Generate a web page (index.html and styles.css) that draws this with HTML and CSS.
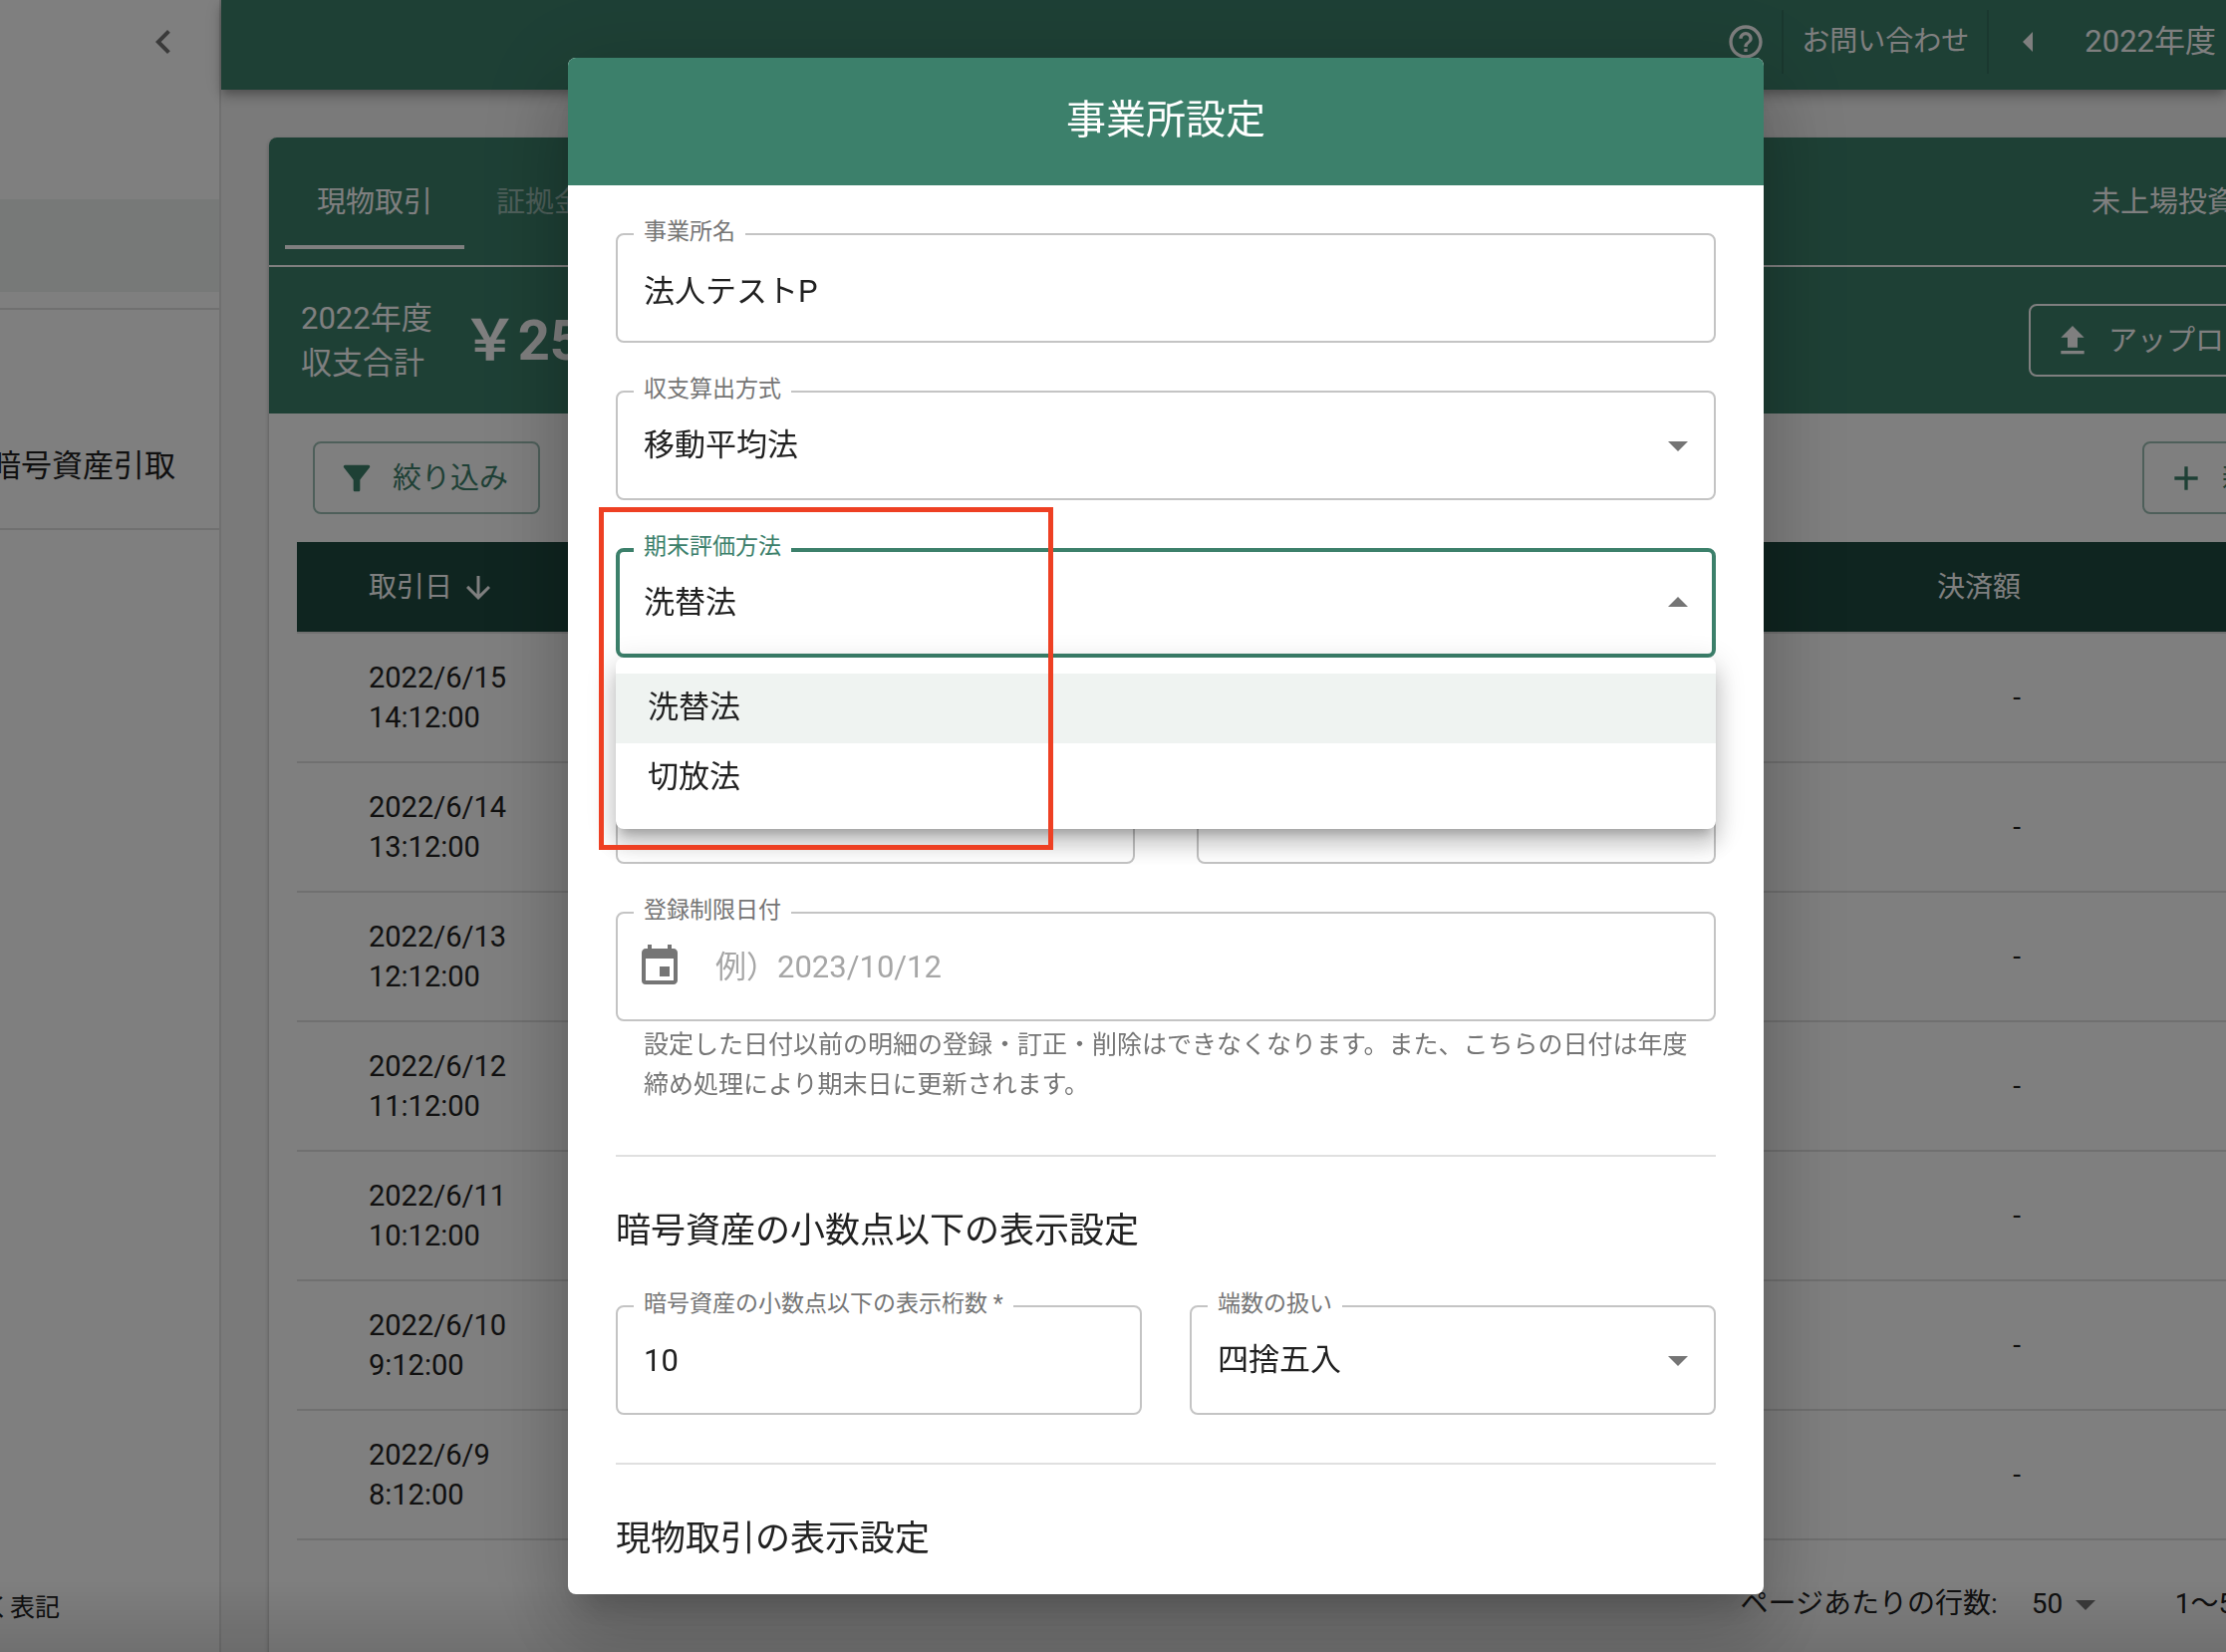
FILE: index.html
```html
<!DOCTYPE html>
<html lang="ja">
<head>
    <meta charset="UTF-8">
    <meta name="viewport" content="width=device-width, initial-scale=1.0">
    <title>事業所設定</title>
    <link rel="stylesheet" href="styles.css">
</head>
<body>
    <div class="app">
        <aside class="sidebar">
            <div class="sidebar-head">
                <button class="icon-button" aria-label="メニューを閉じる">
                    <svg class="icon icon-lg" viewBox="0 0 24 24"><path d="M15.41 7.41L14 6l-6 6 6 6 1.41-1.41L10.83 12z"/></svg>
                </button>
            </div>
            <div class="sidebar-current"></div>
            <nav class="sidebar-nav">
                <a href="#">暗号資産引取</a>
            </nav>
            <a href="#" class="sidebar-law">く表記</a>
        </aside>

        <div class="main">
            <header class="topbar">
                <button class="icon-button help" aria-label="ヘルプ">
                    <svg class="icon icon-md" viewBox="0 0 24 24"><path d="M11 18h2v-2h-2v2zm1-16C6.48 2 2 6.48 2 12s4.48 10 10 10 10-4.48 10-10S17.52 2 12 2zm0 18c-4.41 0-8-3.59-8-8s3.59-8 8-8 8 3.59 8 8-3.59 8-8 8zm0-14c-2.21 0-4 1.79-4 4h2c0-1.1.9-2 2-2s2 .9 2 2c0 2-3 1.75-3 5h2c0-2.25 3-2.5 3-5 0-2.21-1.79-4-4-4z"/></svg>
                </button>
                <a href="#" class="contact">お問い合わせ</a>
                <div class="year">
                    <button class="icon-button" aria-label="前の年度">
                        <svg class="icon icon-lg" viewBox="0 0 24 24"><path d="M14 7l-5 5 5 5V7z"/></svg>
                    </button>
                    <span>2022年度</span>
                </div>
            </header>

            <main class="content">
                <section class="card">
                    <nav class="tabs">
                        <a href="#" class="tab active">現物取引</a>
                        <a href="#" class="tab">証拠金</a>
                        <a href="#" class="tab unlisted">未上場投資</a>
                    </nav>
                    <div class="summary">
                        <p class="summary-label">2022年度<br>収支合計</p>
                        <p class="summary-total">￥25</p>
                        <button class="button button-light">
                            <svg class="icon icon-md" viewBox="0 0 24 24"><path d="M9 16h6v-6h4l-7-7-7 7h4zm-4 2h14v2H5z"/></svg>
                            アップロード
                        </button>
                    </div>
                    <div class="toolbar">
                        <button class="button">
                            <svg class="icon icon-md" viewBox="0 0 24 24"><path d="M4.25 5.61C6.27 8.2 10 13 10 13v6c0 .55.45 1 1 1h2c.55 0 1-.45 1-1v-6s3.72-4.8 5.74-7.39A1 1 0 0018.95 4H5.04c-.83 0-1.3.95-.79 1.61z"/></svg>
                            絞り込み
                        </button>
                        <button class="button">
                            <svg class="icon icon-md" viewBox="0 0 24 24"><path d="M19 13h-6v6h-2v-6H5v-2h6V5h2v6h6v2z"/></svg>
                            新規追加
                        </button>
                    </div>
                    <table class="trades">
                        <thead>
                            <tr>
                                <th class="date"><span class="sort">取引日 <svg class="icon icon-sm" viewBox="0 0 24 24"><path d="M20 12l-1.41-1.41L13 16.17V4h-2v12.17l-5.58-5.59L4 12l8 8 8-8z"/></svg></span></th>
                                <th class="amount">決済額</th>
                                <th class="rest"></th>
                            </tr>
                        </thead>
                        <tbody>
                            <tr><td class="date">2022/6/15<br>14:12:00</td><td class="amount">-</td><td></td></tr>
                            <tr><td class="date">2022/6/14<br>13:12:00</td><td class="amount">-</td><td></td></tr>
                            <tr><td class="date">2022/6/13<br>12:12:00</td><td class="amount">-</td><td></td></tr>
                            <tr><td class="date">2022/6/12<br>11:12:00</td><td class="amount">-</td><td></td></tr>
                            <tr><td class="date">2022/6/11<br>10:12:00</td><td class="amount">-</td><td></td></tr>
                            <tr><td class="date">2022/6/10<br>9:12:00</td><td class="amount">-</td><td></td></tr>
                            <tr><td class="date">2022/6/9<br>8:12:00</td><td class="amount">-</td><td></td></tr>
                        </tbody>
                    </table>
                    <div class="pagination">
                        <label for="rows">ページあたりの行数:</label>
                        <div class="rows">
                            <select id="rows">
                                <option>50</option>
                            </select>
                            <svg class="icon icon-lg arrow" viewBox="0 0 24 24"><path d="M7 10l5 5 5-5z"/></svg>
                        </div>
                        <span>1〜50</span>
                    </div>
                </section>
            </main>
        </div>
    </div>

    <div class="backdrop">
        <div class="modal" role="dialog" aria-labelledby="modal-title">
            <h1 id="modal-title" class="modal-title">事業所設定</h1>
            <form class="modal-body">
                <div class="field">
                    <label for="office">事業所名</label>
                    <input type="text" id="office" value="法人テストP">
                </div>

                <div class="field">
                    <label for="method">収支算出方式</label>
                    <select id="method">
                        <option>移動平均法</option>
                    </select>
                    <svg class="icon icon-lg arrow" viewBox="0 0 24 24"><path d="M7 10l5 5 5-5z"/></svg>
                </div>

                <div class="field open">
                    <label for="valuation">期末評価方法</label>
                    <select id="valuation">
                        <option>洗替法</option>
                        <option>切放法</option>
                    </select>
                    <svg class="icon icon-lg arrow" viewBox="0 0 24 24"><path d="M7 14l5-5 5 5z"/></svg>
                    <ul class="menu" role="listbox" aria-label="期末評価方法">
                        <li role="option" aria-selected="true" class="selected">洗替法</li>
                        <li role="option" aria-selected="false">切放法</li>
                    </ul>
                    <div class="highlight"></div>
                </div>

                <!-- fiscal period, mostly covered while the menu is open -->
                <div class="period">
                    <div class="field"><input type="text" aria-label="期首"></div>
                    <div class="field"><input type="text" aria-label="期末"></div>
                </div>

                <div class="field with-icon">
                    <label for="limit">登録制限日付</label>
                    <svg class="icon icon-lg" viewBox="0 0 24 24"><path d="M17 12h-5v5h5v-5zM16 1v2H8V1H6v2H5c-1.11 0-1.99.9-1.99 2L3 19a2 2 0 002 2h14c1.1 0 2-.9 2-2V5c0-1.1-.9-2-2-2h-1V1h-2zm3 18H5V8h14v11z"/></svg>
                    <input type="text" id="limit" placeholder="例）2023/10/12">
                </div>
                <p class="helper">設定した日付以前の明細の登録・訂正・削除はできなくなります。また、こちらの日付は年度締め処理により期末日に更新されます。</p>

                <hr>
                <h2>暗号資産の小数点以下の表示設定</h2>
                <div class="columns">
                    <div class="field">
                        <label for="digits">暗号資産の小数点以下の表示桁数 *</label>
                        <input type="text" id="digits" value="10">
                    </div>
                    <div class="field">
                        <label for="rounding">端数の扱い</label>
                        <select id="rounding">
                            <option>四捨五入</option>
                        </select>
                        <svg class="icon icon-lg arrow" viewBox="0 0 24 24"><path d="M7 10l5 5 5-5z"/></svg>
                    </div>
                </div>

                <hr>
                <h2>現物取引の表示設定</h2>
            </form>
        </div>
    </div>
</body>
</html>
```

FILE: styles.css
```css
:root {
    --green: #3c806b;
    --green-dark: #1e4a40;
    --text: #212121;
    --line: #e0e0e0;
    --overhang: 188px; /* the card is wider than the window */
}

*, *::before, *::after {
    box-sizing: border-box;
}

body {
    margin: 0;
    overflow: hidden;
    color: var(--text);
    font: 28px/40px Roboto, "Noto Sans CJK JP", sans-serif;
}

h1, h2, p, ul {
    margin: 0;
    padding: 0;
    font-weight: 400;
}

a {
    color: inherit;
    text-decoration: none;
}

button, input, select {
    color: inherit;
    font: inherit;
}

.icon {
    display: block;
    flex: none;
    fill: currentColor;
}

.icon-sm { width: 36px; height: 36px; }
.icon-md { width: 40px; height: 40px; }
.icon-lg { width: 48px; height: 48px; }

.icon-button {
    padding: 0;
    border: 0;
    background: none;
}

.app {
    display: flex;
    height: 100vh;
    overflow: hidden;
}

/* sidebar */
.sidebar {
    display: flex;
    flex-direction: column;
    flex: none;
    width: 222px;
    overflow: hidden;
    border-right: 2px solid var(--line);
    background: #fff;
}

.sidebar-head {
    display: flex;
    justify-content: flex-end;
    height: 200px;
    padding: 18px 32px;
    color: #757575;
}

.sidebar-head .icon-button {
    height: 48px;
}

.sidebar-current {
    height: 93px;
    background: #eff3f1;
}

.sidebar-nav {
    display: flex;
    justify-content: flex-end;
    align-items: flex-end;
    height: 223px;
    margin-top: 16px;
    padding: 0 44px 42px 0;
    border-top: 2px solid var(--line);
    border-bottom: 2px solid var(--line);
    font-size: 31px;
    white-space: nowrap;
}

.sidebar-law {
    align-self: flex-end;
    margin-top: auto;
    padding: 0 160px 24px 0;
    font-size: 25px;
    white-space: nowrap;
}

/* top bar */
.main {
    display: flex;
    flex-direction: column;
    flex: 1;
    min-width: 0;
    background: #f5f5f5;
}

.topbar {
    display: flex;
    justify-content: flex-end;
    align-items: center;
    flex: none;
    height: 90px;
    padding: 0 10px 6px 0;
    background: var(--green);
    color: #fff;
    box-shadow: 0 4px 8px -2px rgba(0, 0, 0, .2), 0 8px 10px rgba(0, 0, 0, .14), 0 2px 20px rgba(0, 0, 0, .12);
}

.contact {
    margin-left: 16px;
    padding: 12px 18px;
    border: solid rgba(0, 0, 0, .12);
    border-width: 0 2px;
}

.year {
    display: flex;
    align-items: center;
    gap: 32px;
    margin-left: 16px;
    font-size: 31px;
}

/* card */
.content {
    display: flex;
    flex: 1;
    padding: 48px 0 0 48px;
}

.card {
    flex: none;
    width: calc(100% + var(--overhang));
    overflow: hidden;
    border-radius: 8px 8px 0 0;
    background: #fff;
    box-shadow: 0 2px 4px rgba(0, 0, 0, .3);
}

.tabs {
    display: flex;
    padding: 16px;
    border-bottom: 2px solid #fff;
    background: var(--green);
    color: #fff;
    font-size: 29px;
}

.tab {
    padding: 29px 32px 23px;
    border-bottom: 4px solid transparent;
    color: rgba(255, 255, 255, .5);
}

.tab.active {
    border-color: #fff;
    color: #fff;
}

.tab.unlisted {
    margin: 0 130px 0 auto;
    color: #fff;
}

.summary {
    display: flex;
    align-items: center;
    height: 147px;
    padding: 0 100px 0 32px;
    background: var(--green);
    color: #fff;
}

.summary-label {
    font-size: 31px;
    line-height: 45px;
}

.summary-total {
    margin: 0 auto 0 30px;
    font-size: 56px;
    font-weight: 700;
}

.toolbar {
    display: flex;
    justify-content: space-between;
    padding: 28px 44px;
}

.button {
    display: flex;
    align-items: center;
    gap: 16px;
    height: 73px;
    padding: 0 30px 0 22px;
    border: 2px solid rgba(60, 128, 107, .5);
    border-radius: 8px;
    background: none;
    color: var(--green);
    font-size: 29px;
}

.button-light {
    border-color: #fff;
    color: #fff;
}

.trades {
    width: calc(100% - 56px);
    margin: 0 28px;
    border-collapse: separate;
    border-spacing: 0;
    line-height: 40px;
}

.trades th {
    height: 92px;
    padding: 2px 0 0;
    border-bottom: 2px solid var(--line);
    background: var(--green-dark);
    background-clip: padding-box;
    color: #fff;
    font-weight: 400;
}

.trades td {
    height: 130px;
    padding: 0;
    border-bottom: 2px solid var(--line);
}

.trades .date {
    padding-left: 72px;
    text-align: left;
}

.trades td.date {
    font-size: 29px;
}

.trades .amount {
    text-align: right;
}

.trades .rest {
    width: 366px;
}

.sort {
    display: flex;
    align-items: center;
    gap: 8px;
}

.pagination {
    display: flex;
    justify-content: flex-end;
    align-items: center;
    height: 128px;
    padding-right: 164px;
}

.rows {
    position: relative;
    margin: 0 66px 0 34px;
}

.rows select {
    appearance: none;
    display: block;
    width: 78px;
    padding: 0;
    border: 0;
    background: none;
}

.rows .arrow {
    position: absolute;
    top: -4px;
    right: 0;
    color: #757575;
    pointer-events: none;
}

/* modal */
.backdrop {
    position: fixed;
    inset: 0;
    display: flex;
    justify-content: center;
    padding: 58px 0 58px 106px;
    background: rgba(0, 0, 0, .5);
}

.backdrop::before {
    content: "";
    position: absolute;
    inset: auto 0 0;
    height: 72px;
    background: linear-gradient(transparent, rgba(0, 0, 0, .12));
}

.modal {
    position: relative;
    width: 100%;
    max-width: 1200px;
    overflow: hidden;
    border-radius: 8px;
    background: #fff;
    box-shadow: 0 22px 30px -14px rgba(0, 0, 0, .2), 0 48px 76px 6px rgba(0, 0, 0, .14), 0 18px 92px 16px rgba(0, 0, 0, .12);
}

.modal-title {
    height: 128px;
    background: var(--green);
    color: #fff;
    font-size: 40px;
    line-height: 126px;
    text-align: center;
}

.modal-body {
    padding: 48px;
}

.field {
    position: relative;
    display: flex;
    align-items: center;
    height: 110px;
    margin-bottom: 48px;
    border: 2px solid #c4c4c4;
    border-radius: 8px;
    font-size: 31px;
}

.field label {
    position: absolute;
    top: -23px;
    left: 16px;
    padding: 0 10px;
    background: #fff;
    color: #757575;
    font-size: 23px;
}

.field input, .field select {
    appearance: none;
    width: 100%;
    height: 100%;
    padding: 0 26px;
    border: 0;
    background: none;
    outline: none;
}

.field input::placeholder {
    color: #a6a6a6;
    opacity: 1;
}

.field .icon {
    color: #757575;
}

.field .arrow {
    position: absolute;
    right: 12px;
    pointer-events: none;
}

.field.with-icon .icon {
    margin-left: 18px;
}

.field.with-icon input {
    padding-left: 32px;
}

.field.open {
    border: 4px solid var(--green);
    z-index: 1;
}

.field.open label {
    top: -25px;
    left: 14px;
    color: var(--green);
}

.field.open select {
    padding-left: 24px;
}

.field.open .arrow {
    right: 10px;
}

.menu {
    position: absolute;
    top: calc(100% + 4px);
    left: -4px;
    right: -4px;
    padding: 16px 0;
    border-radius: 8px;
    background: #fff;
    box-shadow: 0 10px 10px -6px rgba(0, 0, 0, .2), 0 16px 20px 2px rgba(0, 0, 0, .14), 0 6px 28px 4px rgba(0, 0, 0, .12);
    list-style: none;
}

.menu li {
    height: 70px;
    padding: 0 32px;
    line-height: 68px;
}

.menu .selected {
    background: #eff3f1;
}

/* red frame round the valuation setting */
.highlight {
    position: absolute;
    top: -45px;
    left: -21px;
    width: 456px;
    height: 344px;
    border: 5px solid #ee4023;
    pointer-events: none;
}

.period {
    display: grid;
    grid-template-columns: 1fr 1fr;
    gap: 62px;
    margin-top: 97px;
}

.helper {
    margin: -44px 0 50px;
    padding: 0 20px 0 28px;
    color: #757575;
    font-size: 25px;
}

hr {
    height: 2px;
    margin: 0;
    border: 0;
    background: var(--line);
}

h2 {
    margin: 48px 0;
    font-size: 35px;
    line-height: 53px;
}

.columns {
    display: grid;
    grid-template-columns: 1fr 1fr;
    gap: 48px;
}
```
